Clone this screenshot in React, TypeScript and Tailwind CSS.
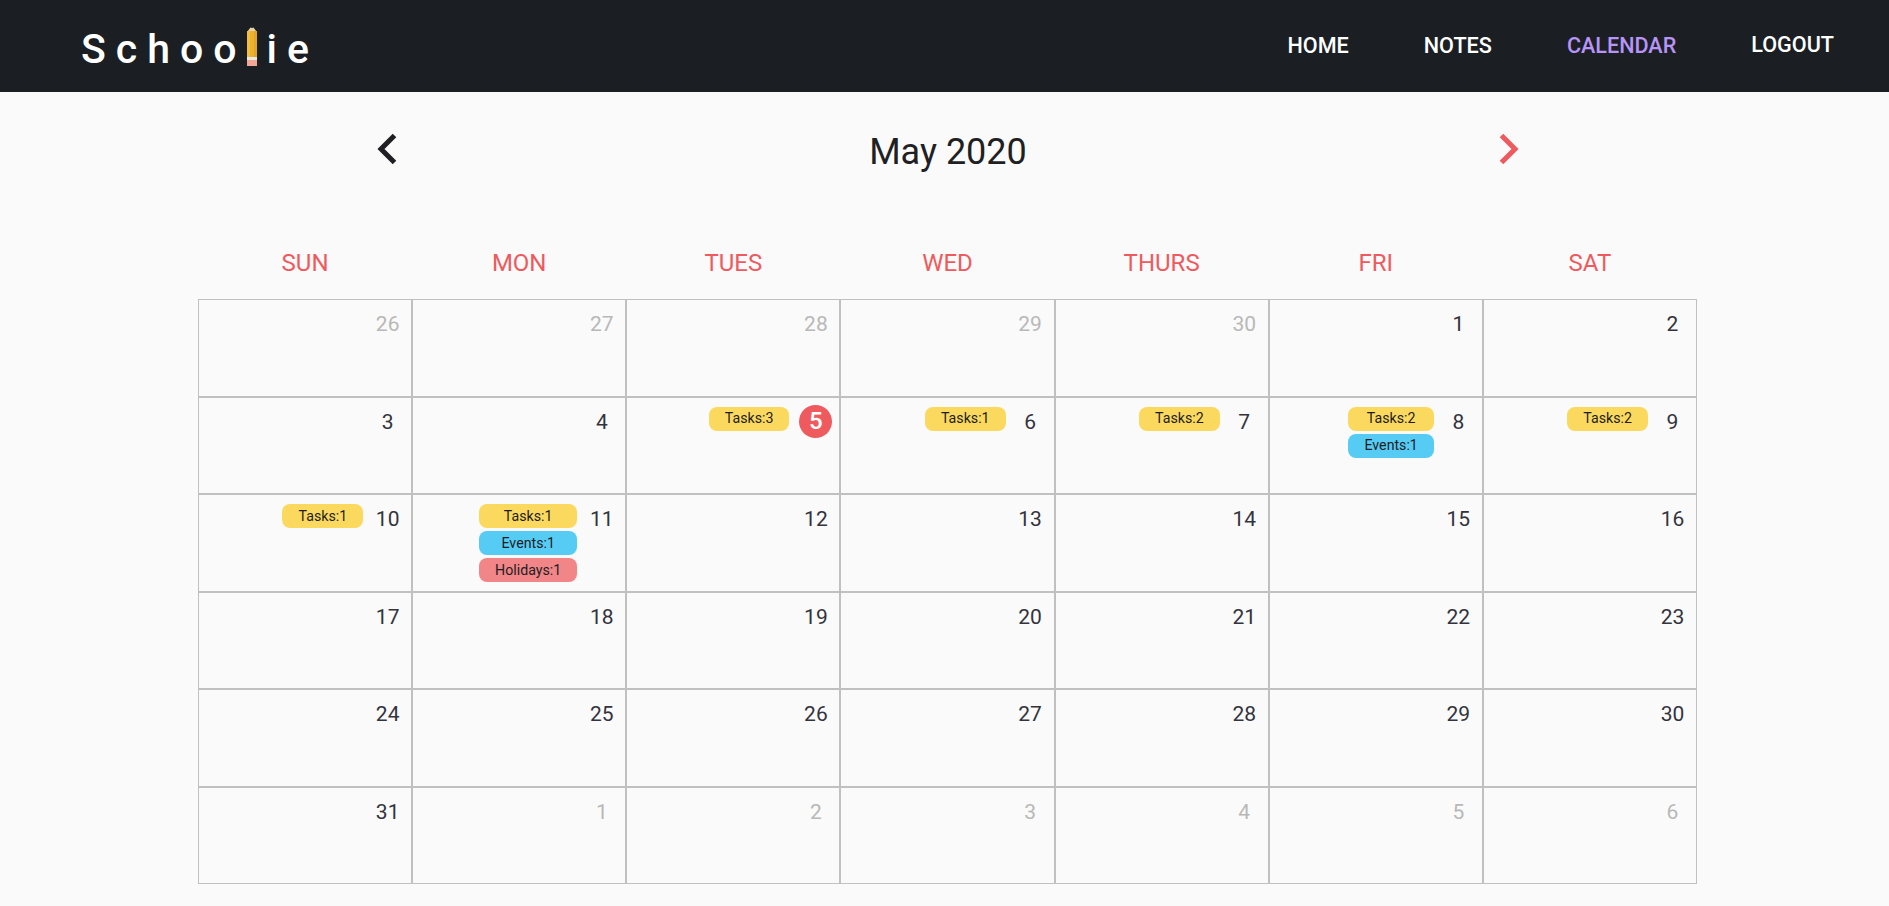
const WEEKDAYS = ["SUN", "MON", "TUES", "WED", "THURS", "FRI", "SAT"];

type Day = {
  n: number;
  muted?: boolean;
  today?: boolean;
  tasks?: number;
  events?: number;
  holidays?: number;
};

const DAYS: Day[] = [
  { n: 26, muted: true },
  { n: 27, muted: true },
  { n: 28, muted: true },
  { n: 29, muted: true },
  { n: 30, muted: true },
  { n: 1 },
  { n: 2 },
  { n: 3 },
  { n: 4 },
  { n: 5, today: true, tasks: 3 },
  { n: 6, tasks: 1 },
  { n: 7, tasks: 2 },
  { n: 8, tasks: 2, events: 1 },
  { n: 9, tasks: 2 },
  { n: 10, tasks: 1 },
  { n: 11, tasks: 1, events: 1, holidays: 1 },
  { n: 12 },
  { n: 13 },
  { n: 14 },
  { n: 15 },
  { n: 16 },
  { n: 17 },
  { n: 18 },
  { n: 19 },
  { n: 20 },
  { n: 21 },
  { n: 22 },
  { n: 23 },
  { n: 24 },
  { n: 25 },
  { n: 26 },
  { n: 27 },
  { n: 28 },
  { n: 29 },
  { n: 30 },
  { n: 31 },
  { n: 1, muted: true },
  { n: 2, muted: true },
  { n: 3, muted: true },
  { n: 4, muted: true },
  { n: 5, muted: true },
  { n: 6, muted: true },
];

function Pencil() {
  return (
    <svg width="10" height="40" viewBox="0 0 10 40" className="mr-[10px] mb-[-2px] shrink-0" aria-hidden="true">
      <path d="M0 6 L3.5 1.5 L6.5 1.5 L10 6 Z" fill="#e8d3a8" />
      <path d="M3.5 2 L5 0 L6.5 2 Z" fill="#3a3128" />
      <rect x="0" y="5" width="3" height="26" fill="#f5bf3c" />
      <rect x="3" y="5" width="4" height="26" fill="#eeb02f" />
      <rect x="7" y="5" width="3" height="26" fill="#e3a526" />
      <rect x="0" y="31" width="10" height="3" fill="#e9e9e4" />
      <rect x="0" y="34" width="10" height="6" fill="#f2a795" />
    </svg>
  );
}

function Logo() {
  return (
    <div className="mb-[2px] flex items-end text-[41px] leading-[30px] font-medium text-white">
      <span className="tracking-[10px]">Schoo</span>
      <Pencil />
      <span className="tracking-[10px]">ie</span>
    </div>
  );
}

function Pill({ label, className }: { label: string; className: string }) {
  return (
    <div className={`flex h-6 items-center justify-center rounded-lg px-4 text-[14.2px] leading-none text-[#1d1d24] ${className}`}>
      {label}
    </div>
  );
}

function DayCell({ day }: { day: Day }) {
  const hasPills = day.tasks || day.events || day.holidays;
  return (
    <div className={`flex h-[97.5px] items-start justify-end border border-[#c0c0c0] pt-[7px] pr-[7px] ${day.today ? "gap-[10px]" : "gap-[8px]"}`}>
      {hasPills ? (
        <div className="flex flex-col gap-[3px] pt-[2px]">
          {day.tasks ? <Pill label={`Tasks:${day.tasks}`} className="bg-[#fbd95e]" /> : null}
          {day.events ? <Pill label={`Events:${day.events}`} className="bg-[#56ccf5]" /> : null}
          {day.holidays ? <Pill label={`Holidays:${day.holidays}`} className="bg-[#f28587]" /> : null}
        </div>
      ) : null}
      {day.today ? (
        <div className="flex h-[33px] w-[33px] items-center justify-center rounded-full bg-[#ef5a5e] text-[24px] font-medium text-white">
          {day.n}
        </div>
      ) : (
        <div className={`flex h-[33px] w-[33px] items-center justify-center pt-[3px] text-[21px] ${day.muted ? "text-[#b8b8b8]" : "text-[#33333d]"}`}>
          {day.n}
        </div>
      )}
    </div>
  );
}

export default function App() {
  return (
    <div className="min-h-[906px] bg-[#fafafa] font-['Roboto',sans-serif]">
      <header className="flex h-[92px] items-center justify-between bg-[#1b1f24] pr-[55px] pl-[81px]">
        <Logo />
        <nav className="flex items-center gap-[75px] text-[21.6px] font-medium text-white">
          <a href="#">HOME</a>
          <a href="#">NOTES</a>
          <a href="#" className="text-[#b794f6]">CALENDAR</a>
          <a href="#" className="mb-[2px]">LOGOUT</a>
        </nav>
      </header>

      <main className="ml-[198px] w-[1499px]">
        <div className="flex h-[114px] items-center justify-between pr-[178px] pl-[179px]">
          <svg width="20" height="34" viewBox="0 0 20 34" aria-hidden="true">
            <path d="M17.5 3.5 L4 17 L17.5 30.5" fill="none" stroke="#1f1f24" strokeWidth="5" />
          </svg>
          <h1 className="pt-[5px] text-[36px] font-normal text-[#1f1f24]">May 2020</h1>
          <svg width="20" height="34" viewBox="0 0 20 34" aria-hidden="true">
            <path d="M2.5 3.5 L16 17 L2.5 30.5" fill="none" stroke="#ef5a5e" strokeWidth="5" />
          </svg>
        </div>

        <div className="grid h-[93px] grid-cols-7 items-center pt-[20px] text-center text-[24px] text-[#ef5a5e]">
          {WEEKDAYS.map((d) => (
            <div key={d}>{d}</div>
          ))}
        </div>

        <div className="grid grid-cols-7">
          {DAYS.map((day, i) => (
            <DayCell key={i} day={day} />
          ))}
        </div>
      </main>
    </div>
  );
}
